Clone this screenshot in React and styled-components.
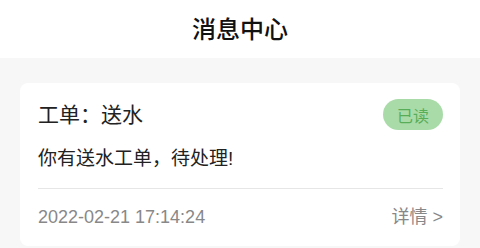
import React from 'react'
import styled, { createGlobalStyle } from 'styled-components';

const GlobalStyle = createGlobalStyle`
  html, body {
    margin: 0;
    padding: 0;
    background: #f7f7f7;
    font-family: "Liberation Sans", "Noto Sans CJK SC", sans-serif;
  }
`;

const Page = styled.div`
  width: 480px;
  height: 248px;
  display: flex;
  flex-direction: column;
  background: #f7f7f7;
  overflow: hidden;
`;

const Header = styled.div`
  height: 58px;
  flex-shrink: 0;
  background: #ffffff;
  display: flex;
  align-items: center;
  justify-content: center;
`;

const Title = styled.div`
  font-family: "Noto Sans CJK SC", sans-serif;
  font-size: 24px;
  font-weight: 500;
  color: #111;
  margin-top: -3px;
`;

const List = styled.div`
  padding: 25px 20px 0;
`;

const Card = styled.div`
  background: #ffffff;
  border-radius: 8px;
  padding: 16px 17px 16px 18px;
  display: flex;
  flex-direction: column;
`;

const Row = styled.div`
  display: flex;
  align-items: center;
  justify-content: space-between;
`;

const Subject = styled.div`
  font-size: 21px;
  color: #222;
  line-height: 31px;
`;

const Badge = styled.div`
  width: 60px;
  height: 31px;
  border-radius: 16px;
  background: ${({ read }) => (read ? '#a9dba9' : '#f5b3a9')};
  color: ${({ read }) => (read ? '#58ad58' : '#d9534f')};
  font-size: 16px;
  display: flex;
  align-items: center;
  justify-content: center;
`;

const Body = styled.div`
  margin-top: 15px;
  font-size: 19px;
  line-height: 28px;
  color: #222;
`;

const Divider = styled.div`
  height: 1px;
  background: #e6e6e6;
  margin-top: 15px;
`;

const Footer = styled(Row)`
  margin-top: 15px;
  font-size: 18px;
  line-height: 26px;
  color: #888;
`;

const More = styled.span`
  color: #888;
`;

const message = {
  subject: '工单：送水',
  text: '你有送水工单，待处理!',
  time: '2022-02-21 17:14:24',
  read: true,
};

const App = () => {
  return (
    <Page>
      <GlobalStyle />
      <Header>
        <Title>消息中心</Title>
      </Header>
      <List>
        <Card>
          <Row>
            <Subject>{message.subject}</Subject>
            <Badge read={message.read}>{message.read ? '已读' : '未读'}</Badge>
          </Row>
          <Body>{message.text}</Body>
          <Divider />
          <Footer>
            <span>{message.time}</span>
            <More>详情 &gt;</More>
          </Footer>
        </Card>
      </List>
    </Page>
  )
}

export default App
